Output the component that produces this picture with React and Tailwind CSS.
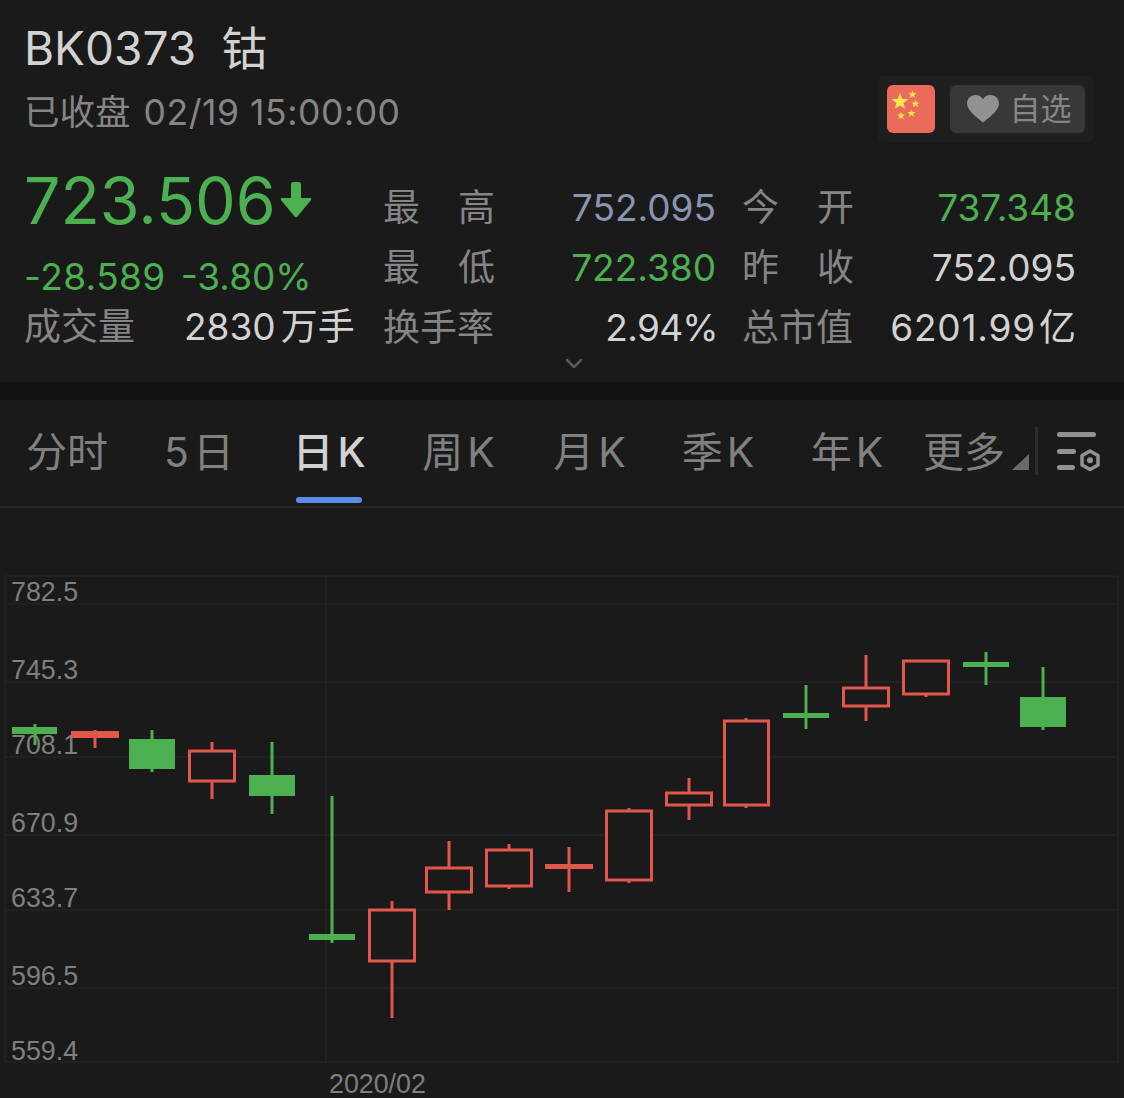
import React from "react";

const G = "#4caf50";
const R = "#e2574c";
const W = "#d2d2d2";
const candles = [
  [35, 724, 745, 12, 57, 727, 734, G, 1],
  [95, 730, 748, 71, 119, 731, 738, R, 1],
  [152, 730, 772, 129, 175, 739, 769, G, 1],
  [212, 742, 799, 189, 235, 751, 781, R, 0],
  [272, 742, 814, 249, 295, 775, 796, G, 1],
  [332, 796, 943, 309, 355, 934, 940, G, 1],
  [392, 901, 1018, 369, 415, 910, 961, R, 0],
  [449, 841, 910, 426, 472, 868, 892, R, 0],
  [509, 844, 889, 486, 532, 850, 886, R, 0],
  [569, 847, 892, 545, 593, 864, 869, R, 1],
  [629, 808, 883, 606, 652, 811, 880, R, 0],
  [689, 778, 820, 666, 712, 793, 805, R, 0],
  [746, 718, 808, 724, 769, 721, 805, R, 0],
  [806, 685, 729, 783, 829, 713, 718, G, 1],
  [866, 655, 721, 843, 889, 688, 706, R, 0],
  [926, 660, 697, 903, 949, 661, 694, R, 0],
  [986, 652, 685, 963, 1009, 662, 667, G, 1],
  [1043, 667, 730, 1020, 1066, 697, 727, G, 1],
];
const gridY = [576, 604, 682, 757, 835, 910, 988, 1062];
const labels = [
  ["782.5", 601],
  ["745.3", 679],
  ["708.1", 754],
  ["670.9", 832],
  ["633.7", 907],
  ["596.5", 985],
  ["559.4", 1060],
];

function Spread({ a, b }) {
  return (
    <span className="flex w-[112px] justify-between text-[#858585]">
      <span>{a}</span>
      <span>{b}</span>
    </span>
  );
}

function Row({ a, b, v1, c1, d, e, v2, c2 }) {
  return (
    <div className="flex h-[60px] items-center">
      <Spread a={a} b={b} />
      <span className="w-[221px] text-right" style={{ color: c1 }}>{v1}</span>
      <span className="ml-[26px]"><Spread a={d} b={e} /></span>
      <span className="w-[222px] text-right" style={{ color: c2 }}>{v2}</span>
    </div>
  );
}

function Tab({ w, children, active }) {
  return (
    <div
      className={`relative flex h-full items-center justify-center gap-[4px] pb-[2px] ${active ? "font-medium text-[#d2d2d2]" : "text-[#808080]"}`}
      style={{ width: w }}
    >
      {children}
      {active && <div className="absolute bottom-[3px] left-1/2 h-[6px] w-[66px] -translate-x-1/2 rounded-[3px] bg-[#5b8ee6]" />}
    </div>
  );
}

export default function App() {
  const font = { fontFamily: 'Inter, "Noto Sans CJK SC", sans-serif' };
  return (
    <div className="flex h-[1098px] w-[1124px] flex-col overflow-hidden bg-[#1a1a1a]" style={font}>
      <header className="h-[382px] shrink-0 px-[24px] pt-[20px]">
        <div className="flex items-start justify-between pr-[6px]">
          <div>
            <div className="flex h-[56px] items-center gap-[25px] text-[46px] leading-none text-[#d2d2d2]">
              <span>BK0373</span>
              <span>钴</span>
            </div>
            <div className="mt-[13px] flex gap-[13px] text-[35.5px] leading-[48px] text-[#858585]">
              <span>已收盘</span>
              <span className="tracking-[0.55px]">02/19 15:00:00</span>
            </div>
          </div>
          <div className="mt-[56px] flex h-[66px] w-[216px] items-center gap-[15px] rounded-[6px] bg-[#1f1f1f] pl-[9px]">
            <div className="h-[48px] w-[48px] rounded-[6px] bg-[#ea6a5c]">
              <svg width="48" height="48" viewBox="0 0 48 48" fill="#fbe64b">
                <polygon points="13,8 15.3,14 21.5,14 16.5,18 18.3,24 13,20.4 7.7,24 9.5,18 4.5,14 10.7,14" />
                <polygon points="25.5,5.5 26.6,8.2 29.5,8.2 27.2,10 28.2,12.8 25.5,11.2 22.8,12.8 23.8,10 21.5,8.2 24.4,8.2" />
                <polygon points="28.5,15 29.6,17.6 32.5,17.6 30.2,19.4 31.2,22.2 28.5,20.6 25.8,22.2 26.8,19.4 24.5,17.6 27.4,17.6" />
                <polygon points="24.5,24.5 25.6,27.1 28.5,27.1 26.2,28.9 27.2,31.7 24.5,30.1 21.8,31.7 22.8,28.9 20.5,27.1 23.4,27.1" />
                <polygon points="14,27 15.1,29.6 18,29.6 15.7,31.4 16.7,34.2 14,32.6 11.3,34.2 12.3,31.4 10,29.6 12.9,29.6" />
              </svg>
            </div>
            <div className="flex h-[48px] w-[135px] items-center justify-center gap-[10px] rounded-[6px] bg-[#383838] text-[31px] text-[#868686]">
              <svg className="ml-[2px]" width="34" height="30" viewBox="0 0 34 30" fill="#929292">
                <path d="M17 28.5C13 25 1 17 1 9.5 1 4.500 5 1 9.500 1 12.600 1 15.500 2.600 17 5.200 18.500 2.600 21.400 1 24.500 1 29 1 33 4.500 33 9.500 33 17 21 25 17 28.500Z" />
              </svg>
              <span>自选</span>
            </div>
          </div>
        </div>

        <div className="mt-[21px] flex">
          <div className="w-[359px] shrink-0">
            <div className="flex h-[76px] items-center">
              <span className="text-[64.5px] leading-none" style={{ color: G }}>723.506</span>
              <svg className="ml-[4px] mt-[-2px]" width="32" height="38" viewBox="0 0 32 38" fill={G}>
                <path d="M11 3.500C11 2 12 1 13.500 1h5C20 1 21 2 21 3.500V17h9c1.500 0 1.800 1 1 2L17.500 35.500c-.8 1-2.200 1-3 0L1 19c-.8-1-.5-2 1-2h9V3.500Z" />
              </svg>
            </div>
            <div className="mt-[7px] flex h-[44px] items-center gap-[15px] pt-[16px] text-[37px] leading-none" style={{ color: G }}>
              <span className="tracking-[0.4px]">-28.589</span>
              <span>-3.80%</span>
            </div>
            <div className="mt-[7px] flex h-[60px] items-center text-[37px]">
              <span className="text-[#858585]">成交量</span>
              <span className="ml-[49px] flex items-center gap-[5px]" style={{ color: W }}>2830<span>万手</span></span>
            </div>
          </div>
          <div className="mt-[14px] text-[37px] leading-none">
            <Row a="最" b="高" v1="752.095" c1="#8a93b0" d="今" e="开" v2="737.348" c2={G} />
            <Row a="最" b="低" v1="722.380" c1={G} d="昨" e="收" v2="752.095" c2={W} />
            <div className="flex h-[60px] items-center">
              <span className="w-[112px] whitespace-nowrap text-[#858585]">换手率</span>
              <span className="w-[223px] text-right tracking-[-0.7px]" style={{ color: W }}>2.94%</span>
              <span className="ml-[24px] w-[112px] whitespace-nowrap text-[#858585]">总市值</span>
              <span className="flex w-[222px] items-center justify-end gap-[3px]" style={{ color: W }}>
                <span className="tracking-[0.8px]">6201.99</span>
                <span>亿</span>
              </span>
            </div>
            <div className="flex w-[382px] justify-center">
              <svg width="18" height="12" viewBox="0 0 18 12" fill="none" stroke="#5a5a5a" strokeWidth="2.500" strokeLinecap="round" strokeLinejoin="round">
                <path d="M2 3l7 7 7-7" />
              </svg>
            </div>
          </div>
        </div>
      </header>

      <div className="h-[18px] shrink-0 bg-[#111111]" />

      <nav className="flex h-[108px] shrink-0 items-center border-b-2 border-[#282828] pl-[7px] text-[41px] leading-none">
        <Tab w="120px">分时</Tab>
        <Tab w="144px">5<span>日</span></Tab>
        <Tab w="116px" active>日<span>K</span></Tab>
        <Tab w="143px">周<span>K</span></Tab>
        <Tab w="119px">月<span>K</span></Tab>
        <Tab w="138px">季<span>K</span></Tab>
        <Tab w="120px">年<span>K</span></Tab>
        <div className="relative flex h-full w-[111px] items-center pb-[2px] text-[#808080]">
          <span className="ml-[16px] whitespace-nowrap">更多</span>
        </div>
        <svg className="ml-[-7px] mt-[18px]" width="20" height="20" viewBox="0 0 20 20" fill="#6a6a6a">
          <polygon points="18,2 18,18 1,18" />
        </svg>
        <div className="ml-[4px] mt-[-4px] h-[48px] w-[3px] bg-[#2c2c2c]" />
        <svg className="ml-[19px] mt-[1px]" width="46" height="44" viewBox="0 0 46 44" fill="none">
          <rect x="0" y="0" width="39" height="5" rx="2.500" fill="#929292" />
          <rect x="0" y="17" width="19" height="5" rx="2.500" fill="#929292" />
          <rect x="0" y="33" width="18" height="5" rx="2.500" fill="#929292" />
          <polygon points="33,19 41,23.500 41,33 33,37.500 25,33 25,23.500" stroke="#929292" strokeWidth="3.500" strokeLinejoin="round" />
          <circle cx="33" cy="28.200" r="3" fill="#929292" />
        </svg>
      </nav>

      <div className="flex-1">
        <svg width="1124" height="590" viewBox="0 508 1124 590" className="block">
          {gridY.map((y) => (
            <line key={y} x1="5" x2="1118" y1={y} y2={y} stroke="#242424" strokeWidth="1.500" />
          ))}
          {[5, 326, 1118].map((x) => (
            <line key={x} x1={x} x2={x} y1="576" y2="1062" stroke="#242424" strokeWidth="1.500" />
          ))}
          {labels.map(([t, y]) => (
            <text key={t} x="11" y={y} fontSize="26.8" fill="#7f7f7f" fontFamily='"Liberation Sans", sans-serif'>{t}</text>
          ))}
          <text x="329" y="1093" fontSize="26.8" fill="#7f7f7f" fontFamily='"Liberation Sans", sans-serif'>2020/02</text>
          {candles.map(([x, wt, wb, l, r, t, b, c, fill], i) => (
            <g key={i}>
              <line x1={x} x2={x} y1={wt} y2={wb} stroke={c} strokeWidth="3" />
              {fill ? (
                <rect x={l} y={t} width={r - l} height={b - t} fill={c} />
              ) : (
                <rect x={l + 0.5} y={t} width={r - l - 1} height={b - t} fill="#1a1a1a" stroke={c} strokeWidth="3" />
              )}
            </g>
          ))}
        </svg>
      </div>
    </div>
  );
}
